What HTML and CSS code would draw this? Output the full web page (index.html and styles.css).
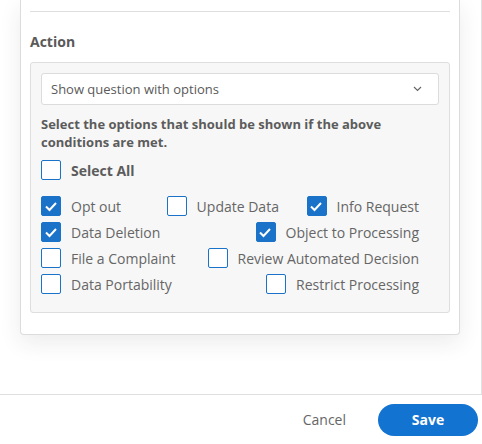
FILE: index.html
```html
<!DOCTYPE html>
<html>
<head>
<meta charset="utf-8">
<link rel="stylesheet" href="styles.css">
</head>
<body>
<div class="scroll">
  <div class="card">
    <div class="sep"></div>
    <div class="title">Action</div>
    <div class="panel">
      <div class="select">
        <span>Show question with options</span>
        <svg class="chev" width="9" height="6" viewBox="0 0 9 6"><polyline points="1,1 4.5,4.5 8,1" fill="none" stroke="#666" stroke-width="1.2"/></svg>
      </div>
      <div class="hint">Select the options that should be shown if the above conditions are met.</div>
      <label class="opt all"><span class="box"></span><span class="lbl">Select All</span></label>
      <div class="opts">
        <label class="opt min"><span class="box on"><svg width="20" height="20" viewBox="0 0 20 20"><polyline points="5,10.5 8.5,14 15,7" fill="none" stroke="#fff" stroke-width="2"/></svg></span><span class="lbl">Opt out</span></label>
        <label class="opt"><span class="box"></span><span class="lbl">Update Data</span></label>
        <label class="opt"><span class="box on"><svg width="20" height="20" viewBox="0 0 20 20"><polyline points="5,10.5 8.5,14 15,7" fill="none" stroke="#fff" stroke-width="2"/></svg></span><span class="lbl">Info Request</span></label>
        <label class="opt"><span class="box on"><svg width="20" height="20" viewBox="0 0 20 20"><polyline points="5,10.5 8.5,14 15,7" fill="none" stroke="#fff" stroke-width="2"/></svg></span><span class="lbl">Data Deletion</span></label>
        <label class="opt"><span class="box on"><svg width="20" height="20" viewBox="0 0 20 20"><polyline points="5,10.5 8.5,14 15,7" fill="none" stroke="#fff" stroke-width="2"/></svg></span><span class="lbl">Object to Processing</span></label>
        <label class="opt"><span class="box"></span><span class="lbl">File a Complaint</span></label>
        <label class="opt"><span class="box"></span><span class="lbl">Review Automated Decision</span></label>
        <label class="opt"><span class="box"></span><span class="lbl">Data Portability</span></label>
        <label class="opt"><span class="box"></span><span class="lbl">Restrict Processing</span></label>
      </div>
    </div>
  </div>
</div>
<div class="footer">
  <button class="cancel">Cancel</button>
  <button class="save">Save</button>
</div>
</body>
</html>
```
FILE: styles.css
```css
* { box-sizing: border-box; }
html, body { margin: 0; padding: 0; background: #fff; }
body { font-family: "Open Sans", "Liberation Sans", sans-serif; color: #5c5c5c; width: 482px; height: 444px; overflow: hidden; }
.scroll { height: 395px; border-right: 1px solid #e2e2e2; border-bottom: 1px solid #dedede; overflow: hidden; padding: 0 21px 0 20px; }
.card { width: 440px; border: 1px solid #dcdcdc; border-top: none; border-radius: 0 0 4px 4px; padding: 11px 9px 21px; background: #fff; box-shadow: 0 8px 22px rgba(40,40,60,0.09); }
.sep { height: 1px; background: #dedede; }
.title { font-weight: 700; font-size: 14px; line-height: 20px; margin-top: 20px; color: #595959; }
.panel { margin-top: 10px; background: #f7f7f7; border: 1px solid #dedede; border-radius: 3px; padding: 10px 10px 18px; }
.select { height: 32px; background: #fff; border: 1px solid #dcdcdc; border-radius: 3px; display: flex; align-items: center; justify-content: space-between; padding: 0 16px 0 9px; font-size: 13px; color: #5a5a5a; }
.chev { display: block; }
.hint { margin-top: 10px; font-size: 13px; font-weight: 700; line-height: 18px; color: #5c5c5c; padding-right: 6px; }
.opt { display: flex; align-items: center; gap: 10px; height: 20px; font-size: 14px; color: #666; }
.all { margin-top: 9px; }
.all .lbl { font-weight: 700; color: #5c5c5c; }
.box { width: 20px; height: 20px; border: 1.5px solid #1a73c8; border-radius: 2px; background: #fff; flex: none; position: relative; }
.box.on { background: #1a73c8; border-color: #1a73c8; }
.box svg { position: absolute; left: -1.5px; top: -1.5px; }
.opts { margin-top: 16px; width: 378px; display: flex; flex-wrap: wrap; justify-content: space-between; row-gap: 6px; }
.min { min-width: 98px; }
.footer { height: 49px; display: flex; align-items: center; justify-content: flex-end; gap: 32px; padding-right: 4px; }
button { font-family: "Open Sans", "Liberation Sans", sans-serif; font-size: 14px; border: none; cursor: pointer; }
.cancel { background: none; color: #666; padding: 0; }
.save { width: 100px; height: 32px; border-radius: 16px; background: #1373d1; color: #fff; font-weight: 700; }
```
